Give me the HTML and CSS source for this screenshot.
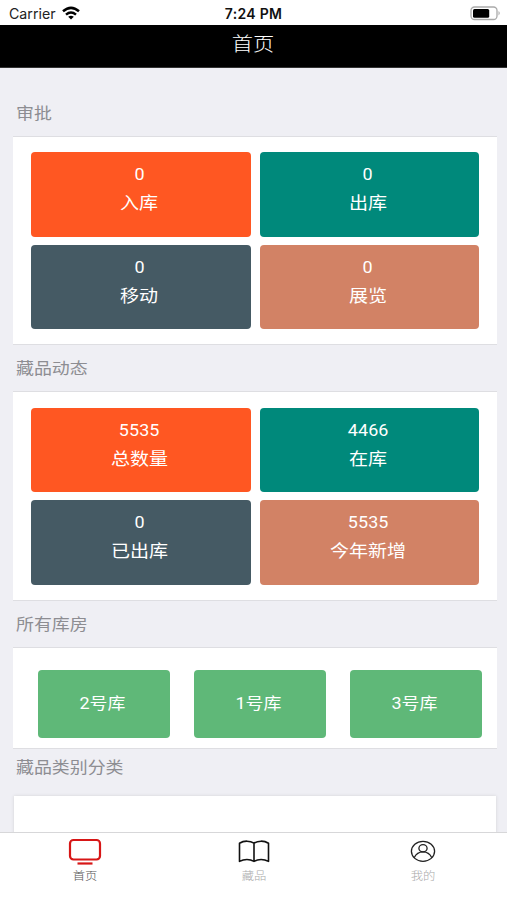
FILE: index.html
```html
<!DOCTYPE html>
<html lang="zh-CN">
<head>
<meta charset="utf-8">
<title>首页</title>
<link rel="stylesheet" href="styles.css">
</head>
<body>
<div class="app">
  <header class="status">
    <div class="carrier"><span>Carrier</span>
      <svg width="18" height="14" viewBox="0 0 18 14" fill="none" stroke="#000" stroke-width="2.5"><path d="M1 5.3Q9-1.6 17 5.3M4 8.6Q9 4.4 14 8.6"/><path d="M9 13.6 6.2 10.8Q9 8.7 11.8 10.8Z" fill="#000" stroke="none"/></svg>
    </div>
    <div class="time">7:24 PM</div>
    <div class="battery"><svg width="31" height="15" viewBox="0 0 31 15"><rect x="1" y="1" width="26" height="12.5" rx="3.5" fill="#fff" stroke="#aaa" stroke-width="1.3"/><rect x="3" y="3" width="16.2" height="8.7" rx="1.5"/><path d="M28.5 5Q31 7.2 28.5 9.5Z" fill="#aaa"/></svg></div>
  </header>
  <h1 class="nav"><span>首页</span></h1>
  <main class="content">
    <h2 class="heading first"><span>审批</span></h2>
    <section class="panel grid">
      <div class="card orange"><b>0</b><span>入库</span></div>
      <div class="card teal"><b>0</b><span>出库</span></div>
      <div class="card slate"><b>0</b><span>移动</span></div>
      <div class="card clay"><b>0</b><span>展览</span></div>
    </section>
    <h2 class="heading"><span>藏品动态</span></h2>
    <section class="panel grid">
      <div class="card orange"><b>5535</b><span>总数量</span></div>
      <div class="card teal"><b>4466</b><span>在库</span></div>
      <div class="card slate"><b>0</b><span>已出库</span></div>
      <div class="card clay"><b>5535</b><span>今年新增</span></div>
    </section>
    <h2 class="heading"><span>所有库房</span></h2>
    <section class="panel rooms">
      <div class="room"><span>2号库</span></div>
      <div class="room"><span>1号库</span></div>
      <div class="room"><span>3号库</span></div>
    </section>
    <h2 class="heading last"><span>藏品类别分类</span></h2>
    <section class="panel chart"></section>
  </main>
  <nav class="tabs">
    <div class="tab active">
      <svg width="34" height="28" viewBox="0 0 34 28" fill="none" stroke="#d71616" stroke-width="2.2"><rect x="2" y="2" width="30" height="19.5" rx="3.5"/><path d="M9.5 25.5h15"/></svg>
      <span>首页</span>
    </div>
    <div class="tab">
      <svg width="34" height="28" viewBox="0 0 34 28" fill="none" stroke="#111" stroke-width="1.6" stroke-linejoin="round"><path d="M17 5.2C13 2.6 7 2.4 2.5 5.2V23.4C7 21 13 21 17 23.4C21 21 27 21 31.5 23.4V5.2C27 2.4 21 2.6 17 5.2ZM17 5.2V23.4"/></svg>
      <span>藏品</span>
    </div>
    <div class="tab">
      <svg width="34" height="28" viewBox="0 0 34 28" fill="none" stroke="#222" stroke-width="1.3"><ellipse cx="17" cy="13.3" rx="11.6" ry="10"/><ellipse cx="17" cy="10.2" rx="4.1" ry="3.6"/><path d="M8.2 19.7C10 15.8 13 13.8 17 13.8S24 15.8 25.8 19.7"/></svg>
      <span>我的</span>
    </div>
  </nav>
</div>
</body>
</html>
```
FILE: styles.css
```css
* { box-sizing: border-box; }
body {
  margin: 0;
  background: #efeff4;
  font-family: Roboto, "Noto Sans CJK SC", sans-serif;
}
.app {
  display: flex;
  flex-direction: column;
  height: 900px;
  overflow: hidden;
}
.status {
  flex: none;
  display: grid;
  grid-template-columns: 1fr auto 1fr;
  align-items: center;
  height: 25px;
  padding: 2px 6px 0 9px;
  background: #fff;
  color: #222;
  font: 14px/20px Inter, sans-serif;
}
.carrier { display: flex; align-items: center; gap: 6px; }
.carrier span { font-size: 14.2px; }
.carrier svg { margin-top: -2px; }
.time { margin-right: 3px; color: #111; font-weight: 600; letter-spacing: .3px; }
.battery { justify-self: end; height: 15px; margin-top: -1px; }
.battery svg { display: block; }
.nav {
  flex: none;
  height: 43px;
  margin: 0;
  background: #000;
  border-bottom: 1px solid #333;
  color: #fff;
  font-size: 19px;
  font-weight: 300;
  line-height: 39px;
  text-align: center;
}
.nav span, .heading span, .card span, .card b, .room span, .tab span {
  display: inline-block;
  transform: scaleX(1.12);
}
.content {
  flex: 1;
  min-height: 0;
  overflow: hidden;
  padding: 0 10px 0 13px;
}
.heading {
  height: 46px;
  margin: 0;
  padding-left: 3px;
  color: #8d8d92;
  font-size: 16px;
  font-weight: 400;
  line-height: 47px;
}
.heading span { transform-origin: left; }
.heading.first { height: 67.5px; line-height: 92px; }
.heading.last { height: 47.5px; line-height: 38px; }
.panel {
  background: #fff;
  border: solid #dedee2;
  border-width: 1px 0;
}
.grid {
  display: grid;
  grid-template-columns: 1fr 1fr;
  gap: 8px 9px;
  height: 209.5px;
  padding: 15.5px 18px 0;
  grid-auto-rows: 84.5px;
}
.card {
  display: flex;
  flex-direction: column;
  align-items: center;
  padding: 9px 3px 0 0;
  border-radius: 4px;
  color: #fff;
  font-size: 17px;
}
.card b { font-size: 16px; font-weight: 400; line-height: 27px; letter-spacing: .1px; }
.card span { line-height: 30px; }
.orange { background: #ff5722; }
.teal { background: #00897b; }
.slate { background: #455a64; }
.clay { background: #d28265; }
.rooms {
  display: flex;
  gap: 23.5px;
  height: 102px;
  padding: 22px 15px 0 25px;
}
.room {
  flex: 1;
  height: 68px;
  padding-right: 3px;
  border-radius: 4px;
  background: #5fb878;
  color: #fff;
  font-size: 16px;
  line-height: 68px;
  text-align: center;
}
.chart { height: 60px; margin: 0 1px; border: 0; box-shadow: 0 0 3px #d2d2d6; }
.tabs {
  flex: none;
  display: flex;
  height: 68px;
  border-top: 1px solid #d7d7d9;
  background: #fff;
}
.tab {
  flex: 1;
  display: flex;
  flex-direction: column;
  align-items: center;
  padding-top: 5px;
  color: #aaa;
  font-size: 11px;
  font-weight: 300;
}
.tab svg { display: block; }
.tab span { line-height: 22px; }
.tab.active { color: #555; }
```
